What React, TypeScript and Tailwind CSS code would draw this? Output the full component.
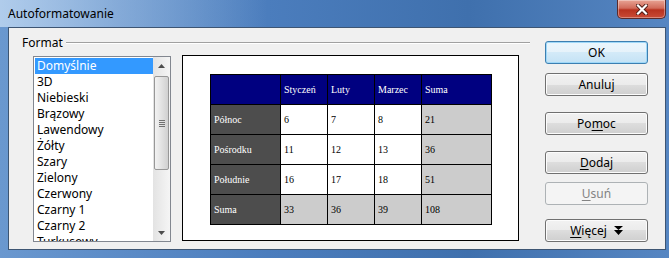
import React from 'react';

const presets = [
  'Domyślnie',
  '3D',
  'Niebieski',
  'Brązowy',
  'Lawendowy',
  'Żółty',
  'Szary',
  'Zielony',
  'Czerwony',
  'Czarny 1',
  'Czarny 2',
  'Turkusowy',
];

type Cell = { text: string; kind: 'head' | 'side' | 'body' | 'sum' };

const rows: Cell[][] = [
  [
    { text: '', kind: 'head' },
    { text: 'Styczeń', kind: 'head' },
    { text: 'Luty', kind: 'head' },
    { text: 'Marzec', kind: 'head' },
    { text: 'Suma', kind: 'head' },
  ],
  [
    { text: 'Północ', kind: 'side' },
    { text: '6', kind: 'body' },
    { text: '7', kind: 'body' },
    { text: '8', kind: 'body' },
    { text: '21', kind: 'sum' },
  ],
  [
    { text: 'Pośrodku', kind: 'side' },
    { text: '11', kind: 'body' },
    { text: '12', kind: 'body' },
    { text: '13', kind: 'body' },
    { text: '36', kind: 'sum' },
  ],
  [
    { text: 'Południe', kind: 'side' },
    { text: '16', kind: 'body' },
    { text: '17', kind: 'body' },
    { text: '18', kind: 'body' },
    { text: '51', kind: 'sum' },
  ],
  [
    { text: 'Suma', kind: 'side' },
    { text: '33', kind: 'sum' },
    { text: '36', kind: 'sum' },
    { text: '39', kind: 'sum' },
    { text: '108', kind: 'sum' },
  ],
];

const cellClass = {
  head: 'bg-[#000080] text-white',
  side: 'bg-[#4d4d4d] text-white',
  body: 'bg-white text-black',
  sum: 'bg-[#cccccc] text-black',
};

function Button({
  children,
  isDefault,
  disabled,
  className,
}: {
  children: React.ReactNode;
  isDefault?: boolean;
  disabled?: boolean;
  className?: string;
}) {
  const look = disabled
    ? 'border-[#adb2b5] bg-[#f4f4f4] text-[#838383]'
    : isDefault
      ? 'border-[#3c7fb1] bg-[linear-gradient(#eaf6fd_0%,#e6f2fa_50%,#d3eaf8_50%,#c4e2f5_100%)] text-black shadow-[inset_0_0_0_1px_#9fd8f8]'
      : 'border-[#707070] bg-[linear-gradient(#f2f2f2_0%,#ebebeb_50%,#dddddd_50%,#cfcfcf_100%)] text-black shadow-[inset_0_0_0_1px_#fcfcfc]';
  return (
    <div
      className={`flex h-[23px] w-[103px] items-center justify-center rounded-[3px] border text-[12px] leading-none ${look} ${className ?? ''}`}
    >
      {children}
    </div>
  );
}

export default function App() {
  return (
    <div className="flex h-[258px] w-[669px] flex-col overflow-hidden bg-[linear-gradient(90deg,#6a98cf_0%,#4b7dbd_40%,#3f70ad_70%,#5686c2_100%)] font-['Noto_Sans','Liberation_Sans',sans-serif]">
      {/* Title bar */}
      <div className="flex h-[27px] items-start justify-between bg-[linear-gradient(90deg,rgba(200,222,245,0.75)_0%,rgba(180,206,236,0.45)_18%,rgba(255,255,255,0)_40%)] pl-[8px] pr-[3px]">
        <span className="mt-[5px] text-[12px] leading-[18px] text-black">Autoformatowanie</span>
        <div className="flex h-[19px] w-[49px] items-center justify-center rounded-b-[5px] border border-t-0 border-[#5a2a2a] bg-[linear-gradient(#e8a494_0%,#d16b5a_45%,#b8321f_55%,#c94b36_100%)] shadow-[inset_0_0_0_1px_rgba(255,255,255,0.35)]">
          <svg width="12" height="11" viewBox="0 0 12 11">
            <path d="M2 1.5 L10 9.5 M10 1.5 L2 9.5" stroke="#4a1a14" strokeWidth="4" strokeLinecap="square" />
            <path d="M2 1.5 L10 9.5 M10 1.5 L2 9.5" stroke="#ffffff" strokeWidth="2.2" strokeLinecap="square" />
          </svg>
        </div>
      </div>

      {/* Client area */}
      <div className="flex flex-1 pb-[8px] pl-[8px] pr-[3px]">
        <div className="flex flex-1 border border-[#3d5573] bg-[#f0f0f0] text-[12px] text-black">
          {/* Format group */}
          <div className="w-[521px] pl-[13px] pt-[7px]">
            <div className="flex h-[16px] items-center">
              <span className="leading-[16px]">Format</span>
              <div className="ml-[3px] flex-1 border-t border-b border-t-[#a0a0a0] border-b-white" />
            </div>
            <div className="mt-[4px] flex items-start">
              {/* list box */}
              <div className="ml-[11px] mt-[1px] flex h-[186px] w-[138px] border border-[#828790] bg-white">
                <div className="flex-1 overflow-hidden pt-px">
                  {presets.map((p, i) => (
                    <div
                      key={p}
                      className={`ml-px h-[16px] whitespace-nowrap pl-[2px] leading-[16px] ${
                        i === 0 ? 'bg-[#3399ff] text-white' : 'text-black'
                      }`}
                    >
                      {p}
                    </div>
                  ))}
                </div>
                {/* scrollbar */}
                <div className="flex w-[17px] flex-col bg-[linear-gradient(90deg,#e3e3e3,#f5f5f5)]">
                  <div className="flex h-[17px] items-center justify-center">
                    <svg width="7" height="4" viewBox="0 0 7 4">
                      <path d="M0 4 L3.5 0 L7 4 Z" fill="#4d4d4d" />
                    </svg>
                  </div>
                  <div className="mx-px mt-[2px] flex h-[94px] items-center justify-center rounded-[2px] border border-[#979797] bg-[linear-gradient(90deg,#f2f2f2,#e2e2e2_50%,#d0d0d0)]">
                    <div className="flex flex-col gap-[1px]">
                      <div className="h-px w-[6px] bg-[#707070]" />
                      <div className="h-px w-[6px] bg-[#707070]" />
                      <div className="h-px w-[6px] bg-[#707070]" />
                      <div className="h-px w-[6px] bg-[#707070]" />
                    </div>
                  </div>
                  <div className="flex-1" />
                  <div className="flex h-[17px] items-center justify-center">
                    <svg width="7" height="4" viewBox="0 0 7 4">
                      <path d="M0 0 L7 0 L3.5 4 Z" fill="#4d4d4d" />
                    </svg>
                  </div>
                </div>
              </div>

              {/* preview */}
              <div className="ml-[11px] h-[186px] w-[337px] border border-black bg-white pl-[27px] pt-[18px]">
                <div className="grid w-[282px] grid-cols-[69px_46px_46px_46px_69px] gap-px bg-black p-px font-['Liberation_Serif',serif] text-[10px]">
                  {rows.flatMap((row, r) =>
                    row.map((c, i) => (
                      <div
                        key={`${r}-${i}`}
                        className={`flex h-[29px] items-center pl-[3px] ${cellClass[c.kind]}`}
                      >
                        {c.text}
                      </div>
                    )),
                  )}
                </div>
              </div>
            </div>
          </div>

          {/* Buttons */}
          <div className="ml-[15px] flex flex-col pt-[13px]">
            <Button isDefault>OK</Button>
            <Button className="mt-[9px]">Anuluj</Button>
            <Button className="mt-[16px]">
              Po<span className="underline underline-offset-2">m</span>oc
            </Button>
            <Button className="mt-[16px]">
              <span className="underline underline-offset-2">D</span>odaj
            </Button>
            <Button disabled className="mt-[8px]">
              <span className="underline underline-offset-2">U</span>suń
            </Button>
            <Button className="mt-[14px]">
              <span>
                <span className="underline underline-offset-2">W</span>ięcej
              </span>
              <svg className="ml-[7px]" width="9" height="9" viewBox="0 0 9 9">
                <path d="M0 0 L9 0 L4.5 4 Z M0 4 L9 4 L4.5 9 Z" fill="#000" />
              </svg>
            </Button>
          </div>
        </div>
      </div>
    </div>
  );
}
